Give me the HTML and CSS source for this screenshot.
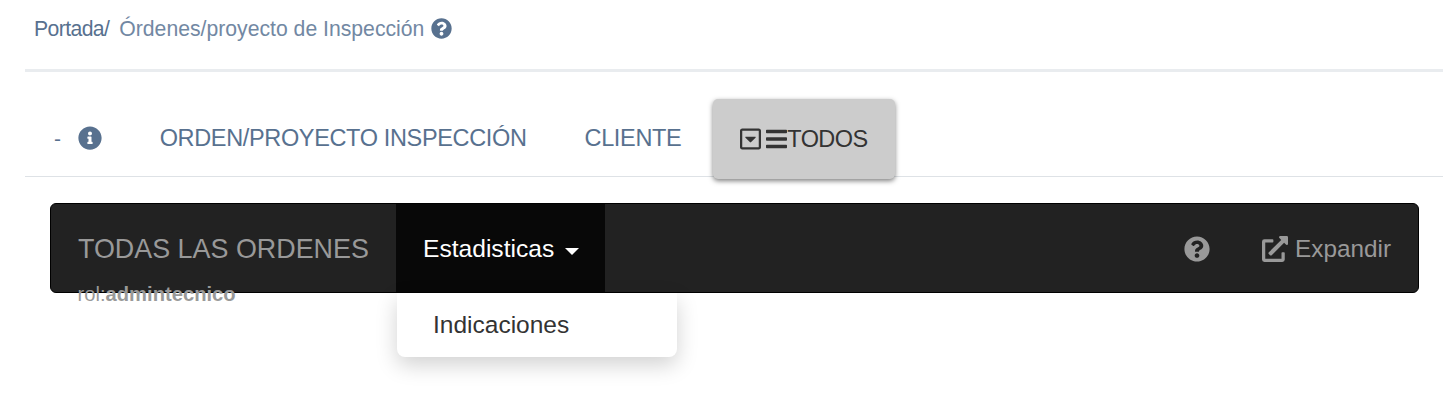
FILE: index.html
```html
<!DOCTYPE html>
<html lang="es">
<head>
    <meta charset="UTF-8" />
    <meta name="viewport" content="width=device-width, initial-scale=1.0"/>
    <title>Órdenes/proyecto de Inspección</title>
    <link rel="stylesheet" href="styles.css">
</head>
<body>

<div class="main-content">
    <!-- breadcrumb -->
    <div class="breadcrumb">
        <a class="crumb-home">Portada/</a>
        <span class="crumb-current">Órdenes/proyecto de Inspección</span>
        <svg class="icon icon-help" viewBox="0 0 512 512"><path d="M504 256c0 136.997-111.043 248-248 248S8 392.997 8 256C8 119.083 119.043 8 256 8s248 111.083 248 248zM262.655 90c-54.497 0-89.255 22.957-116.549 63.758-3.536 5.286-2.353 12.415 2.715 16.258l34.699 26.31c5.205 3.947 12.621 3.008 16.665-2.122 17.864-22.658 30.113-35.797 57.303-35.797 20.429 0 45.698 13.148 45.698 32.958 0 14.976-12.363 22.667-32.534 33.976C247.128 238.528 216 254.941 216 296v4c0 6.627 5.373 12 12 12h56c6.627 0 12-5.373 12-12v-1.333c0-28.462 83.186-29.647 83.186-106.667 0-58.002-60.165-102-116.531-102zM256 338c-25.365 0-46 20.635-46 46 0 25.364 20.635 46 46 46s46-20.636 46-46c0-25.365-20.635-46-46-46z"/></svg>
    </div>

    <!-- tabs -->
    <ul class="tabs">
        <li class="tab">
            <span class="tab-dash">-</span>
            <svg class="icon icon-info" viewBox="0 0 512 512"><path d="M256 8C119.043 8 8 119.083 8 256c0 136.997 111.043 248 248 248s248-111.003 248-248C504 119.083 392.957 8 256 8zm0 110c23.196 0 42 18.804 42 42s-18.804 42-42 42-42-18.804-42-42 18.804-42 42-42zm56 254c0 6.627-5.373 12-12 12h-88c-6.627 0-12-5.373-12-12v-24c0-6.627 5.373-12 12-12h12v-64h-12c-6.627 0-12-5.373-12-12v-24c0-6.627 5.373-12 12-12h64c6.627 0 12 5.373 12 12v100h12c6.627 0 12 5.373 12 12v24z"/></svg>
        </li>
        <li class="tab">ORDEN/PROYECTO INSPECCIÓN</li>
        <li class="tab">CLIENTE</li>
        <li class="tab tab-active">
            <svg class="icon icon-caret-box" viewBox="0 0 448 512"><path d="M125.1 208h197.8c10.7 0 16.1 13 8.5 20.5l-98.9 98.3c-4.7 4.7-12.2 4.7-16.9 0l-98.9-98.3c-7.7-7.5-2.3-20.5 8.4-20.5zM448 80v352c0 26.5-21.5 48-48 48H48c-26.5 0-48-21.5-48-48V80c0-26.5 21.5-48 48-48h352c26.5 0 48 21.5 48 48zm-48 346V86c0-3.3-2.7-6-6-6H54c-3.3 0-6 2.7-6 6v340c0 3.3 2.7 6 6 6h340c3.3 0 6-2.7 6-6z"/></svg>
            <svg class="icon icon-bars" viewBox="0 0 448 512"><path d="M16 132h416c8.837 0 16-7.163 16-16V76c0-8.837-7.163-16-16-16H16C7.163 60 0 67.163 0 76v40c0 8.837 7.163 16 16 16zm0 160h416c8.837 0 16-7.163 16-16v-40c0-8.837-7.163-16-16-16H16c-8.837 0-16 7.163-16 16v40c0 8.837 7.163 16 16 16zm0 160h416c8.837 0 16-7.163 16-16v-40c0-8.837-7.163-16-16-16H16c-8.837 0-16 7.163-16 16v40c0 8.837 7.163 16 16 16z"/></svg>
            <span>TODOS</span>
        </li>
    </ul>

    <!-- navbar -->
    <nav class="navbar">
        <span class="navbar-brand">TODAS LAS ORDENES</span>
        <div class="nav-dropdown">
            <a class="nav-dropdown-toggle">Estadisticas<i class="caret"></i></a>
            <div class="dropdown-menu">
                <a class="dropdown-item">Indicaciones</a>
            </div>
        </div>
        <div class="navbar-right">
            <svg class="icon icon-nav-help" viewBox="0 0 512 512"><path d="M504 256c0 136.997-111.043 248-248 248S8 392.997 8 256C8 119.083 119.043 8 256 8s248 111.083 248 248zM262.655 90c-54.497 0-89.255 22.957-116.549 63.758-3.536 5.286-2.353 12.415 2.715 16.258l34.699 26.31c5.205 3.947 12.621 3.008 16.665-2.122 17.864-22.658 30.113-35.797 57.303-35.797 20.429 0 45.698 13.148 45.698 32.958 0 14.976-12.363 22.667-32.534 33.976C247.128 238.528 216 254.941 216 296v4c0 6.627 5.373 12 12 12h56c6.627 0 12-5.373 12-12v-1.333c0-28.462 83.186-29.647 83.186-106.667 0-58.002-60.165-102-116.531-102zM256 338c-25.365 0-46 20.635-46 46 0 25.364 20.635 46 46 46s46-20.636 46-46c0-25.365-20.635-46-46-46z"/></svg>
            <a class="expand-link">
                <svg class="icon icon-expand" viewBox="0 0 512 512"><path d="M432,320H400a16,16,0,0,0-16,16V448H64V128H208a16,16,0,0,0,16-16V80a16,16,0,0,0-16-16H48A48,48,0,0,0,0,112V464a48,48,0,0,0,48,48H400a48,48,0,0,0,48-48V336A16,16,0,0,0,432,320ZM488,0h-128c-21.37,0-32.05,25.91-17,41l35.73,35.73L135,320.37a24,24,0,0,0,0,34L157.67,377a24,24,0,0,0,34,0L435.28,133.32,471,169c15,15,41,4.5,41-17V24A24,24,0,0,0,488,0Z"/></svg>
                Expandir
            </a>
        </div>
    </nav>
    <div class="role-line">rol:<b>admintecnico</b></div>
</div>

</body>
</html>
```

FILE: styles.css
```css
body {
    margin:0;
    font-family:"Liberation Sans", Arial, sans-serif;
    background:#fff;
}

.main-content {
    min-height:407px;
    box-sizing:border-box;
    padding:0 6px 0 25px;
}

.icon {
    fill:currentColor;
    flex:none;
}

/* breadcrumb */
.breadcrumb {
    display:flex;
    align-items:center;
    height:72px;
    padding:0 0 12px 9px;
    box-sizing:border-box;
    border-bottom:3px solid #e9ecef;
    font-size:21.2px;
    color:#7288a3;
}

.crumb-home {
    letter-spacing:-0.6px;
    color:#58718f;
    margin-right:10px;
}

.icon-help {
    width:21px;
    height:21px;
    margin-left:7px;
    color:#58718f;
}

/* tabs */
.tabs {
    display:flex;
    list-style:none;
    margin:27px 0 0 0;
    padding:0;
    height:77px;
    border-bottom:1px solid #dee2e6;
}

.tab {
    display:flex;
    align-items:center;
    padding:2px 29px 0;
    box-sizing:border-box;
    font-size:23.5px;
    letter-spacing:-0.35px;
    color:#58718f;
}

.tab-dash {
    margin-right:17px;
    font-size:21px;
}

.icon-info {
    width:24px;
    height:24px;
    margin-top:-2px;
}

.tab-active {
    height:80px;
    margin-left:3px;
    padding:0 28px 0 27px;
    background:#ccc;
    color:#333;
    letter-spacing:-0.6px;
    border-radius:5px;
    box-shadow:0 2px 5px rgba(0,0,0,0.5);
}

.icon-caret-box {
    width:21px;
    height:24px;
    margin-right:5px;
}

.icon-bars {
    width:21px;
    height:24px;
}

/* navbar */
.navbar {
    display:flex;
    align-items:stretch;
    height:90px;
    margin:26px 24px 0 25px;
    box-sizing:border-box;
    background:#222;
    border:1px solid #000;
    border-radius:6px;
    font-size:24.3px;
}

.navbar-brand {
    display:flex;
    align-items:center;
    padding:2px 0 0 27px;
    width:345px;
    box-sizing:border-box;
    font-size:26.9px;
    white-space:nowrap;
    color:#999;
}

.nav-dropdown {
    position:relative;
}

.nav-dropdown-toggle {
    display:flex;
    align-items:center;
    height:100%;
    box-sizing:border-box;
    padding:2px 26px 0 27px;
    font-size:24.6px;
    background:#080808;
    color:#fff;
}

.caret {
    width:0;
    height:0;
    margin-left:11px;
    margin-top:4px;
    border-top:7px solid #fff;
    border-left:7px solid transparent;
    border-right:7px solid transparent;
}

.dropdown-menu {
    position:absolute;
    top:calc(100% + 1px);
    left:1px;
    width:280px;
    height:64px;
    display:flex;
    align-items:center;
    background:#fff;
    border-radius:0 0 8px 8px;
    box-shadow:0 8px 21px rgba(0,0,0,0.18);
}

.dropdown-item {
    padding-left:36px;
    font-size:24.5px;
    color:#333;
}

.navbar-right {
    display:flex;
    align-items:center;
    margin-left:auto;
    padding:1px 27px 0 0;
    color:#999;
}

.icon-nav-help {
    width:26px;
    height:26px;
    margin-right:52px;
}

.expand-link {
    display:flex;
    align-items:center;
}

.icon-expand {
    width:26px;
    height:26px;
    margin-right:7px;
}

.role-line {
    margin:-10px 0 0 52.5px;
    font-size:20.2px;
    line-height:22px;
    color:#999;
    position:relative;
}
```
